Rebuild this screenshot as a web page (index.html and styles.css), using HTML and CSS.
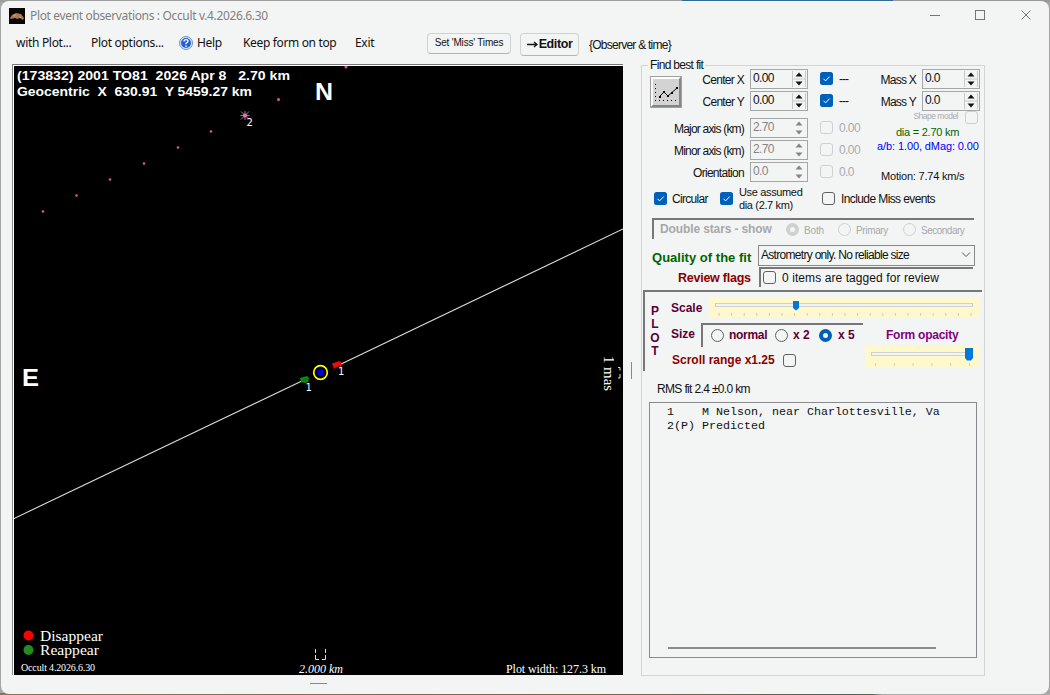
FILE: index.html
```html
<!DOCTYPE html>
<html lang="en">
<head>
<meta charset="utf-8">
<title>Plot event observations</title>
<link rel="stylesheet" href="styles.css">
</head>
<body>
<svg width="0" height="0" class="defs">
  <symbol id="check" viewBox="0 0 13 13"><rect width="13" height="13" rx="2.5" fill="#005fb8"/><path d="M3.5 6.8l2.1 2.1 4-4.3" fill="none" stroke="#fff" stroke-width="1"/></symbol>
  <symbol id="updown" viewBox="0 0 14 18"><path d="M.5 1v16M0 9h14M13.500 1v16" stroke="#c8c8c8" fill="none"/><path d="M3.500 6.500h7L7 2.500zM3.500 11.500h7L7 15.500z" fill="currentColor"/></symbol>
  <symbol id="updown-off" viewBox="0 0 14 18"><path d="M3.500 6.500h7L7 2.500zM3.500 11.500h7L7 15.500z" fill="currentColor"/></symbol>
</svg>
<div class="window">
  <header class="titlebar">
    <svg class="appicon" width="16" height="16"><rect width="16" height="16" fill="#080504"/><path d="M1 10l2-3 4-2 5 1 3 4-1 2-3-2-3 1-2-1-4 1z" fill="#a87750"/><path d="M4 7l4-1-3 3zM10 7l3 3-2 0z" fill="#c79a6c"/></svg>
    <span class="title">Plot event observations : Occult v.4.2026.6.30</span>
    <svg class="winctl" width="104" height="16" fill="none" stroke="#767676"><path d="M1 7.500h10M92.500 2.500l9 9M101.500 2.500l-9 9"/><rect x="46.500" y="2.500" width="9" height="9"/></svg>
  </header>
  <nav class="menubar">
    <span class="m1">with Plot...</span><span class="m2">Plot options...</span>
    <svg class="helpicon" width="14" height="14"><circle cx="7" cy="7" r="6.500" fill="#dbe7fb" stroke="#6f8fc9"/><circle cx="7" cy="7" r="5" fill="#225fd0"/><path d="M5 5.600q0-2 2-2t2 1.700q0 1-2 2v1M7 9.600v1.400" fill="none" stroke="#fff" stroke-width="1.400"/></svg>
    <span class="m3">Help</span><span class="m4">Keep form on top</span><span class="m5">Exit</span>
    <span class="btn miss">Set 'Miss' Times</span><span class="btn editor"><svg width="12" height="9"><path d="M0 4.500h10M7 2l3 2.500L7 7" fill="none" stroke="#111" stroke-width="1.300"/></svg>Editor</span><span class="observer">{Observer &amp; time}</span>
  </nav>
  <main class="content">
    <section class="plotcol">
      <div class="plot">
        <svg width="609" height="609" viewBox="14 66 609 609">
          <rect x="14" y="66" width="609" height="609" fill="#000"/>
          <g class="plothead">
            <text x="17" y="80" xml:space="preserve" textLength="273" lengthAdjust="spacingAndGlyphs">(173832) 2001 TO81  2026 Apr 8   2.70 km</text>
            <text x="17" y="96" xml:space="preserve" textLength="235" lengthAdjust="spacingAndGlyphs">Geocentric  X  630.91  Y 5459.27 km</text>
          </g>
          <text class="compass" x="315" y="100" textLength="18" lengthAdjust="spacingAndGlyphs">N</text>
          <text class="compass" x="22" y="386" textLength="17" lengthAdjust="spacingAndGlyphs">E</text>
          <g fill="#e0559b"><circle cx="43" cy="211.500" r="1.300"/><circle cx="76.500" cy="195.500" r="1.300"/><circle cx="110" cy="179.500" r="1.300"/><circle cx="144" cy="163.500" r="1.300"/><circle cx="178" cy="147.500" r="1.300"/><circle cx="211" cy="131.500" r="1.300"/><circle cx="278.500" cy="99.500" r="1.500"/><circle cx="346" cy="67" r="1.500"/></g>
          <path d="M245 111v9M240.500 115.500h9M241 111.500l8 8M249 111.500l-8 8" stroke="#aaa" stroke-width=".8"/><circle cx="245" cy="115.500" r="2" fill="#ff69b4"/>
          <path d="M14 518.500L304 380M337 366L623 229" stroke="#ddd" stroke-width="1.100"/>
          <circle cx="320.500" cy="372.500" r="6.800" fill="none" stroke="#ff0" stroke-width="1.700"/><circle cx="320.500" cy="372.500" r="2.200" fill="#00008b" stroke="#00f" stroke-width="1.700"/>
          <path d="M332 363l2 0 5-2 2 1 0 5-3-1-4 3z" fill="#f00"/><path d="M300 378l7-2 2 2-1 4-3 1-4-1z" fill="#118a11"/><path d="M335 364l4 2" stroke="#844"/><path d="M303 380l4-1" stroke="#252"/>
          <g class="mark"><text x="246.500" y="126">2</text><text x="338" y="375">1</text><text x="305.500" y="391">1</text></g>
          <text class="serif" transform="translate(604 356) rotate(90)" font-size="14" textLength="35" lengthAdjust="spacingAndGlyphs">1 mas</text>
          <path d="M618 367.500h2v3M620 374v4h-2" fill="none" stroke="#ddd"/>
          <circle cx="28.500" cy="635.500" r="5" fill="#f00"/><circle cx="28.500" cy="650" r="5" fill="#228b22"/>
          <g class="serif"><text x="40" y="641" font-size="14.500" textLength="63" lengthAdjust="spacingAndGlyphs">Disappear</text><text x="40" y="655" font-size="14.500" textLength="59" lengthAdjust="spacingAndGlyphs">Reappear</text>
          <text x="21" y="671" font-size="10" textLength="74">Occult 4.2026.6.30</text>
          <text x="299" y="673" font-size="12" font-style="italic" textLength="44">2.000 km</text>
          <text x="506" y="673" font-size="12" textLength="100">Plot width: 127.3 km</text></g>
          <path d="M315.500 649v4M315.500 655v4.500h3.500M322 659.500h3.500V655M325.500 653v-4" fill="none" stroke="#ddd"/>
        </svg>
      </div>
      <div class="hgrip"></div>
    </section>
    <div class="vgrip"></div>
    <section class="group">
      <div class="legend"><span>Find best fit</span></div>
      <div class="fit">
        <div class="params">
          <svg class="fitbtn" width="32" height="32"><rect width="32" height="32" fill="#a0a0a0"/><path d="M1 1h30l-2 2H3v26l-2 2z" fill="#fff"/><path d="M31 1v30H1l2-2h26V3z" fill="#858585"/><rect x="3" y="3" width="26" height="26" fill="#d3d3d3"/><path d="M5.500 8v16M5 24.500h22" stroke="#000" stroke-dasharray="1 3"/><path d="M9 21l5-5 4 4 9-8" fill="none" stroke="#000"/><path d="M9 20h2v2H9zM13 15h2v2h-2zM17 19h2v2h-2zM21 16h2v2h-2zM26 11h2v2h-2z"/></svg>
          <label class="r1">Center X</label><div class="num r1">0.00<svg><use href="#updown"/></svg></div><svg class="cb r1"><use href="#check"/></svg><span class="v dash r1">---</span>
          <label class="r2">Center Y</label><div class="num r2">0.00<svg><use href="#updown"/></svg></div><svg class="cb r2"><use href="#check"/></svg><span class="v dash r2">---</span>
          <label class="r3">Major axis (km)</label><div class="num off r3">2.70<svg><use href="#updown-off"/></svg></div><i class="cb box off r3"></i><span class="v off r3">0.00</span>
          <label class="r4">Minor axis (km)</label><div class="num off r4">2.70<svg><use href="#updown-off"/></svg></div><i class="cb box off r4"></i><span class="v off r4">0.00</span>
          <label class="r5">Orientation</label><div class="num off r5">0.0<svg><use href="#updown-off"/></svg></div><i class="cb box off r5"></i><span class="v off r5">0.0</span>
        </div>
        <div class="mass">
          <div class="massrow"><label>Mass X</label><div class="num">0.0<svg><use href="#updown"/></svg></div></div>
          <div class="massrow"><label>Mass Y</label><div class="num">0.0<svg><use href="#updown"/></svg></div></div>
          <div class="shape"><span>Shape model</span><i class="box off"></i></div>
          <div class="dia">dia = 2.70 km</div>
          <div class="ab">a/b: 1.00, dMag: 0.00</div>
          <div class="motion">Motion: 7.74 km/s</div>
        </div>
      </div>
      <div class="options">
        <svg class="cb"><use href="#check"/></svg><span class="circular">Circular</span>
        <svg class="cb"><use href="#check"/></svg><span class="assumed">Use assumed<br>dia (2.7 km)</span>
        <i class="box"></i><span class="include">Include Miss events</span>
      </div>
      <div class="double sunk"><b>Double stars - show</b><i class="radio off on"></i><span class="both">Both</span><i class="radio off"></i><span class="primary">Primary</span><i class="radio off"></i><span>Secondary</span></div>
      <div class="quality"><b>Quality of the fit</b><div class="select"><span>Astrometry only. No reliable size</span><svg width="10" height="6"><path d="M1 .5l4 4 4-4" fill="none" stroke="#555"/></svg></div></div>
      <div class="review"><b>Review flags</b><div class="sunk tagged"><i class="box"></i><span>0 items are tagged for review</span></div></div>
      <div class="plotbox sunk">
        <div class="vert"><span>P</span><span>L</span><span>O</span><span>T</span></div>
        <div class="plotrows">
          <div class="scalerow"><b>Scale</b>
            <svg class="slider" width="269" height="19"><rect x="5.500" y="5.500" width="257" height="3" fill="#f2f4f4" stroke="#cfd0d2"/><path d="M8.500 16.500H262" stroke="#d0cdb8" stroke-width="3" stroke-dasharray="1 11.600"/><path d="M83 3h6v7l-3 2.500-3-2.500z" fill="#0078d7"/></svg></div>
          <div class="lower">
            <div>
              <div class="sizerow"><b>Size</b><div class="sunk sizes"><i class="radio"></i><b class="s1">normal</b><i class="radio"></i><b class="s2">x 2</b><i class="radio on"></i><b>x 5</b></div></div>
              <div class="scrollrow"><b>Scroll range x1.25</b><i class="box"></i></div>
            </div>
            <div class="opacity"><b>Form opacity</b>
              <svg class="slider" width="115" height="21"><rect x="6.500" y="6.500" width="96" height="3" fill="#f2f4f4" stroke="#cfd0d2"/><path d="M10 18.500h96" stroke="#d0cdb8" stroke-width="3" stroke-dasharray="1 17.800"/><path d="M100 2h8v10l-2 2.500h-4l-2-2.500z" fill="#0078d7"/></svg></div>
          </div>
        </div>
      </div>
      <div class="rms">RMS fit 2.4 ±0.0 km</div>
      <div class="list"><pre>1    M Nelson, near Charlottesville, Va
2(P) Predicted</pre><div class="hscroll"></div></div>
    </section>
  </main>
</div>
</body>
</html>
```
FILE: styles.css
```css
* { box-sizing: border-box; }
body { margin: 0; width: 1050px; height: 695px; overflow: hidden; padding: 1px; background: linear-gradient(90deg, #9d9d9d 65%, #316a94 65%, #316a94 85%, #999 85%) top / 100% 2px no-repeat, linear-gradient(90deg, #8d7355, #796650 55%, #4f6459 83%, #aaa 84%) bottom / 100% 2px no-repeat, #a6a6a6; font: 12px/14px "Liberation Sans", Arial, sans-serif; color: #111; white-space: nowrap; }
.defs { position: absolute; }
.window { width: 1048px; height: 693px; border-radius: 8px; background: #f3f5f5; overflow: hidden; }
i, b, label, span { display: block; flex: none; }
svg { display: block; flex: none; }

.titlebar { display: flex; height: 29px; align-items: center; padding-left: 8px; }
.title { margin-left: 5px; width: 900px; font: 12px/16px "Noto Sans", sans-serif; letter-spacing: -.35px; color: #808080; }
.winctl { margin-left: -1px; }
.menubar { display: flex; height: 26px; align-items: center; padding-left: 15px; font: 12px/16px "Noto Sans", sans-serif; letter-spacing: -.3px; color: #111; }
.m1 { width: 75px; }
.m2 { width: 88px; }
.m3 { margin-left: 4px; width: 46px; }
.m4 { width: 112px; letter-spacing: -.35px; }
.m5 { width: 72px; }
.btn { display: flex; align-items: center; justify-content: center; border: 1px solid #d0d2d2; border-bottom-color: #b3b5b5; border-radius: 4px; font-family: "Liberation Sans", sans-serif; }
.miss { width: 84px; height: 21px; font-size: 10px; letter-spacing: -.2px; }
.editor { margin: 2px 0 0 9px; width: 59px; height: 23px; font-size: 12.500px; font-weight: 700; letter-spacing: -.4px; }
.observer { margin: 3px 0 0 10px; font: 12px/14px "Liberation Sans", sans-serif; letter-spacing: -.75px; }

.content { display: flex; height: 637px; padding: 7px 0 0 11px; }
.plotcol { width: 611px; }
.plot { width: 611px; height: 611px; border-left: 1px solid #888; border-top: 2px solid #777; padding: 0 0 0 1px; background: #fff; }
.plothead { font: bold 13px "Liberation Sans", sans-serif; fill: #fff; }
.plot { border-top: 1px solid #777; padding-top: 1px; margin-top: 1px; }
.compass { font: bold 24px "Liberation Sans", sans-serif; fill: #fff; }
.mark { font: 10px "DejaVu Sans", sans-serif; fill: #fff; }
.serif { font-family: "Liberation Serif", serif; fill: #fff; }
.hgrip { margin: 8px 0 0 298px; width: 17px; height: 1px; background: #8a8a8a; }
.vgrip { margin: 299px 9px 0 8px; width: 1px; height: 17px; background: #8a8a8a; }
.group { width: 344px; height: 611px; margin-top: 2px; border: 1px solid #d3d5d5; }
.legend { height: 14px; margin: -8px 0 -6px 6px; }
.legend span { width: 57px; padding-left: 2px; background: #f3f5f5; letter-spacing: -.68px; }

.fit { display: flex; height: 122px; padding-top: 2px; }
.params { display: grid; width: 230px; height: 115px; grid-template-columns: 102px 6px 58px 12px 14px 5px 1fr; grid-template-rows: 22px 22px 5px 22px 22px 22px; align-items: center; }
.fitbtn { grid-column: 1; grid-row: 1 / 3; margin-left: 8px; margin-top: 4px; }
label { letter-spacing: -.7px; padding-top: 2px; }
.params label { grid-column: 1; justify-self: end; }
.params label.r3, .params label.r4 { letter-spacing: -.8px; }
.params .num { grid-column: 3; }
.params .cb { grid-column: 5; }
.v { grid-column: 7; letter-spacing: -.6px; }
.dash { letter-spacing: -1px; }
.r1 { grid-row: 1; }
.r2 { grid-row: 2; }
.r3 { grid-row: 4; }
.r4 { grid-row: 5; }
.r5 { grid-row: 6; }
.num { display: flex; justify-content: space-between; width: 58px; height: 20px; border: 1px solid #a5a7a7; padding: 1px 1px 0 2px; font-size: 12px; letter-spacing: -.65px; }
.num svg { width: 14px; height: 18px; margin-top: -1px; }
.num.off { color: #858585; }
.v.off { color: #aaa; }
.cb { width: 13px; height: 13px; margin-top: -1px; }
.box { width: 13px; height: 13px; border: 1px solid #606060; border-radius: 3px; }
.box.off { border-color: #cfd1d1; }

.mass { width: 112px; }
.massrow { display: flex; height: 22px; align-items: center; justify-content: flex-end; gap: 6px; padding-right: 4px; }
.massrow label { letter-spacing: -.75px; }
.shape { display: flex; height: 13px; margin-top: -1px; justify-content: flex-end; gap: 7px; padding-right: 6px; font-size: 8.500px; line-height: 10px; color: #aaa; letter-spacing: -.5px; }
.dia, .ab, .motion { font-size: 11px; }
.dia { margin-top: 1px; padding-left: 24px; color: #006400; letter-spacing: -.25px; }
.ab { padding-left: 5px; color: #00f; letter-spacing: -.1px; }
.motion { margin-top: 16px; padding-left: 9px; letter-spacing: -.2px; }

.options { display: flex; align-items: center; height: 22px; padding-left: 12px; }
.circular { margin-left: 5px; width: 48px; letter-spacing: -.7px; }
.assumed { margin: -1px 0 0 6px; width: 83px; font-size: 11px; line-height: 13px; letter-spacing: -.35px; }
.options .cb, .options .box { margin-top: -1px; }
.include { margin-left: 6px; letter-spacing: -.6px; }
.sunk { border-top: 2px solid #777; border-left: 2px solid #777; }
.double { display: flex; align-items: center; margin: 8px 0 0 10px; width: 322px; height: 21px; padding-left: 6px; font-size: 10px; color: #a6a8a8; }
.double span { padding-top: 3px; letter-spacing: -.15px; }
.double b { width: 126px; font-size: 12px; letter-spacing: -.12px; margin-top: -1px; }
.radio { width: 13px; height: 13px; border: 1px solid #606060; border-radius: 50%; }
.radio.on { border: 4px solid #005fb8; }
.radio.off { border-color: #cfd1d1; }
.both { margin-left: 5px; width: 34px; }
.primary { margin-left: 5px; width: 47px; }
.double span:last-child { margin-left: 5px; letter-spacing: -.5px; }
.double .primary { letter-spacing: -.35px; }

.quality { display: flex; margin-top: 6px; height: 21px; padding-left: 10px; color: #006400; }
.quality b { width: 106px; padding-top: 6px; font-size: 13px; letter-spacing: -.03px; }
.quality b, .review > b { letter-spacing: .02px; }
.select { display: flex; width: 217px; height: 21px; border: 1px solid #888; color: #111; align-items: center; justify-content: space-between; padding: 0 3px 2px 2px; }
.select span { letter-spacing: -.7px; }
.review { display: flex; margin-top: 1px; height: 20px; align-items: center; padding-left: 36px; }
.review > b { width: 81px; padding-top: 1px; font-size: 12.500px; color: #8b0000; letter-spacing: -.25px; }
.tagged { display: flex; align-items: center; width: 214px; height: 20px; padding-left: 2px; }
.tagged .box { margin-top: -1px; }
.tagged span { margin-left: 6px; letter-spacing: .08px; }

.plotbox { display: flex; margin: 3px 0 0 1px; width: 339px; height: 81px; color: #5c0033; }
.vert { width: 20px; padding: 12px 0 0 0; text-align: center; font-weight: 700; }
.vert span { height: 13.300px; }
.plotrows { width: 317px; padding-top: 6px; }
.scalerow { display: flex; height: 19px; }
.scalerow b { width: 45px; padding: 3px 0 0 6px; letter-spacing: 0; }
.slider { background: #fff8cd; }
.lower { display: flex; margin-top: 6px; }
.lower > div:first-child { width: 200px; }
.sizerow { display: flex; }
.sizerow > b { width: 36px; padding: 4px 0 0 6px; }
.sizes { display: flex; align-items: center; width: 162px; height: 24px; padding: 0 0 2px 8px; }
.s1 { margin-left: 5px; width: 46px; letter-spacing: -.3px; }
.s2 { margin-left: 5px; width: 26px; }
.sizes b:last-child { margin-left: 6px; }
.scrollrow { display: flex; align-items: center; padding: 6px 0 0 7px; color: #8b0000; }
.scrollrow b { width: 111px; }
.opacity b { margin: 5px 0 4px 21px; color: #800080; letter-spacing: -.25px; }
.rms { margin: 11px 0 0 15px; letter-spacing: -.65px; }
.list { margin: 6px 0 0 7px; width: 328px; height: 256px; border: 1px solid #888a8d; padding: 2px 0 0 18px; }
pre { margin: 0 0 0 -1px; height: 242px; font: 11.670px/14px "Liberation Mono", monospace; }
.hscroll { width: 268px; height: 2px; background: #8a8a8f; }
```
